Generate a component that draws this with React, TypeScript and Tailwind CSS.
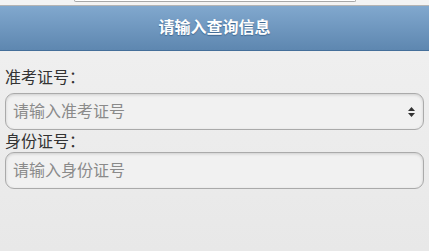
import { useState } from "react";

const cjk = { fontFamily: '"Liberation Sans", "Noto Sans CJK SC", sans-serif' };

const App = () => {
  const [ticket, setTicket] = useState("");
  const [idCard, setIdCard] = useState("");

  return (
    <div className="w-[429px] h-[251px] overflow-hidden bg-gradient-to-b from-[#f1f1f1] to-[#e8e8e8]" style={cjk}>
      {/* remains of the box above, cut off */}
      <div className="h-[6px] bg-[#f3f3f3] border-b border-[#b4b4b4]">
        <div className="mx-auto w-[282px] h-[2px] bg-white border-x border-b border-[#a8a8a8] rounded-b-[3px]" />
      </div>

      <header className="h-[45px] flex items-center justify-center bg-gradient-to-b from-[#81a8ce] to-[#5e87b0] border-b border-[#456f9a]">
        <h1 className="text-white font-bold text-[16px] [text-shadow:0_1px_1px_#3e6790]">请输入查询信息</h1>
      </header>

      <main className="px-[5px] pt-[17px]">
        <label className="block text-[16px] leading-[20px] text-[#333] mb-[5px]">准考证号：</label>
        <div className="relative">
          <input
            type="text"
            value={ticket}
            onChange={(e) => setTicket(e.target.value)}
            placeholder="请输入准考证号"
            className="w-full h-[37px] rounded-[9px] border border-[#aaa] bg-[#f1f1f1] pl-[7px] pr-[24px] text-[16px] text-[#333] placeholder:text-[#8a8a8a] shadow-[inset_0_1px_3px_rgba(0,0,0,0.15)] outline-none"
          />
          <svg className="absolute right-[9px] top-[14px]" width="7" height="10" viewBox="0 0 7 10">
            <path d="M3.5 0 L7 4 L0 4 Z" fill="#333" />
            <path d="M0 6 L7 6 L3.5 10 Z" fill="#333" />
          </svg>
        </div>

        <label className="block text-[16px] leading-[20px] text-[#333] mt-[2px]">身份证号：</label>
        <input
          type="text"
          value={idCard}
          onChange={(e) => setIdCard(e.target.value)}
          placeholder="请输入身份证号"
          className="w-full h-[37px] rounded-[9px] border border-[#aaa] bg-[#f1f1f1] px-[7px] text-[16px] text-[#333] placeholder:text-[#8a8a8a] shadow-[inset_0_1px_3px_rgba(0,0,0,0.15)] outline-none"
        />
      </main>
    </div>
  );
};

export default App;
